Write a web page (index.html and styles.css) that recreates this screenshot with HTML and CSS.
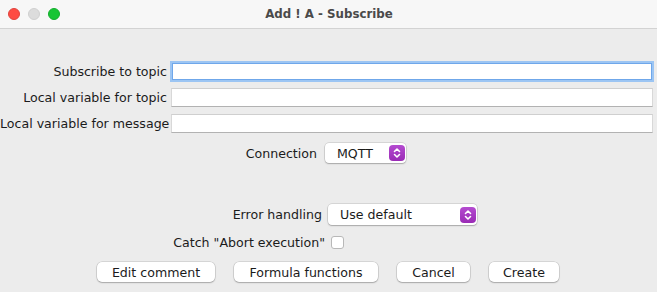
FILE: index.html
```html
<!DOCTYPE html>
<html>
<head>
<meta charset="utf-8">
<link rel="stylesheet" href="styles.css">
</head>
<body>
<div class="window">
  <div class="titlebar">
    <div class="lights">
      <span class="light red"></span>
      <span class="light gray"></span>
      <span class="light green"></span>
    </div>
    <div class="title">Add ! A - Subscribe</div>
  </div>
  <div class="content">
    <div class="fields">
      <div class="frow">
        <label class="flabel">Subscribe to topic</label>
        <div class="field focused"></div>
      </div>
      <div class="frow">
        <label class="flabel">Local variable for topic</label>
        <div class="field"></div>
      </div>
      <div class="frow">
        <label class="flabel">Local variable for message</label>
        <div class="field"></div>
      </div>
    </div>
    <div class="crow conn">
      <span class="clabel w-conn">Connection</span>
      <div class="combo small">
        <span class="ctext">MQTT</span>
        <span class="stepper"><svg width="16" height="16" viewBox="0 0 16 16"><path d="M5.5 6.5 L8 4 L10.5 6.5 M5.5 9.5 L8 12 L10.5 9.5" fill="none" stroke="#fff" stroke-width="1.6" stroke-linecap="round" stroke-linejoin="round"/></svg></span>
      </div>
    </div>
    <div class="crow err">
      <span class="clabel w-err">Error handling</span>
      <div class="combo wide">
        <span class="ctext">Use default</span>
        <span class="stepper"><svg width="16" height="16" viewBox="0 0 16 16"><path d="M5.5 6.5 L8 4 L10.5 6.5 M5.5 9.5 L8 12 L10.5 9.5" fill="none" stroke="#fff" stroke-width="1.6" stroke-linecap="round" stroke-linejoin="round"/></svg></span>
      </div>
    </div>
    <div class="crow catch">
      <span class="clabel w-catch">Catch "Abort execution"</span>
      <span class="checkbox"></span>
    </div>
    <div class="buttons">
      <button class="btn b-edit">Edit comment</button>
      <button class="btn b-formula">Formula functions</button>
      <button class="btn b-cancel">Cancel</button>
      <button class="btn b-create">Create</button>
    </div>
  </div>
</div>
</body>
</html>
```
FILE: styles.css
```css
html, body {
  margin: 0;
  padding: 0;
}
body {
  background: #ececec;
  font-family: "DejaVu Sans", "Liberation Sans", sans-serif;
  font-size: 12.6px;
  color: #1b1b1b;
}
.window {
  width: 657px;
  height: 292px;
  background: #ececec;
  overflow: hidden;
}
.titlebar {
  height: 28px;
  background: #f7f7f7;
  border-bottom: 1px solid #d3d3d3;
  display: flex;
  align-items: center;
  position: relative;
}
.lights {
  display: flex;
  gap: 8px;
  padding-left: 8px;
}
.light {
  width: 12px;
  height: 12px;
  border-radius: 50%;
  box-sizing: border-box;
}
.red { background: #fe4c43; border: 0.5px solid #e0443e; }
.gray { background: #dcdcdc; border: 0.5px solid #d0d0d0; }
.green { background: #18c535; border: 0.5px solid #14ae2d; }
.title {
  position: absolute;
  left: 0;
  right: 0;
  top: 0;
  line-height: 28px;
  text-align: center;
  font-weight: bold;
  font-size: 11.8px;
  color: #4a4a4a;
  padding-left: 1px;
}
.content {
  padding-top: 32px;
}
.fields {
  display: flex;
  flex-direction: column;
  gap: 6px;
}
.frow {
  display: flex;
  align-items: center;
  height: 20px;
  padding-right: 4px;
}
.flabel {
  width: 167px;
  flex: none;
  text-align: right;
  padding-right: 4px;
  white-space: nowrap;
}
.field {
  flex: 1;
  height: 19px;
  box-sizing: border-box;
  background: #fff;
  border-top: 1px solid #cfcfcf;
  border-bottom: 1px solid #b2b2b2;
  border-left: 1px solid #d8d8d8;
  border-right: 1px solid #d8d8d8;
}
.field.focused {
  height: 17px;
  border: 1px solid #6fa7ea;
  box-shadow: 0 0 0 2px #9cc5f3;
  margin: 0 1px;
}
.crow {
  display: flex;
  align-items: center;
}
.conn { margin-top: 10px; height: 20px; }
.err { margin-top: 41px; height: 21px; }
.catch { margin-top: 7px; height: 20px; }
.clabel {
  flex: none;
  text-align: right;
  white-space: nowrap;
}
.w-conn { width: 317px; margin-right: 8px; }
.w-err { width: 322px; margin-right: 6px; }
.w-catch { width: 325px; margin-right: 6px; }
.combo {
  height: 20px;
  box-sizing: border-box;
  background: #fff;
  border-radius: 4px;
  box-shadow: 0 0 0 0.5px rgba(0,0,0,0.18), 0 1px 1.5px rgba(0,0,0,0.22);
  display: flex;
  align-items: center;
  justify-content: space-between;
  padding: 0 1px 0 12px;
}
.combo.small { width: 81px; }
.combo.wide { width: 149px; height: 21px; }
.stepper {
  width: 16px;
  height: 16px;
  border-radius: 4px;
  background: linear-gradient(#b44bd0, #9a2bb5);
  display: flex;
}
.checkbox {
  width: 13px;
  height: 13px;
  box-sizing: border-box;
  background: #fff;
  border: 1px solid #b8b8b8;
  border-radius: 3px;
}
.buttons {
  margin-top: 10px;
  display: flex;
  justify-content: center;
  gap: 19px;
  padding-right: 1px;
}
.btn {
  font-family: inherit;
  font-size: inherit;
  color: #1b1b1b;
  height: 20px;
  padding: 0;
  border: none;
  background: #fff;
  border-radius: 5px;
  box-shadow: 0 0 0 0.5px rgba(0,0,0,0.18), 0 1px 1.5px rgba(0,0,0,0.22);
}
.b-edit { width: 118px; }
.b-formula { width: 144px; }
.b-cancel { width: 73px; }
.b-create { width: 70px; }
```
